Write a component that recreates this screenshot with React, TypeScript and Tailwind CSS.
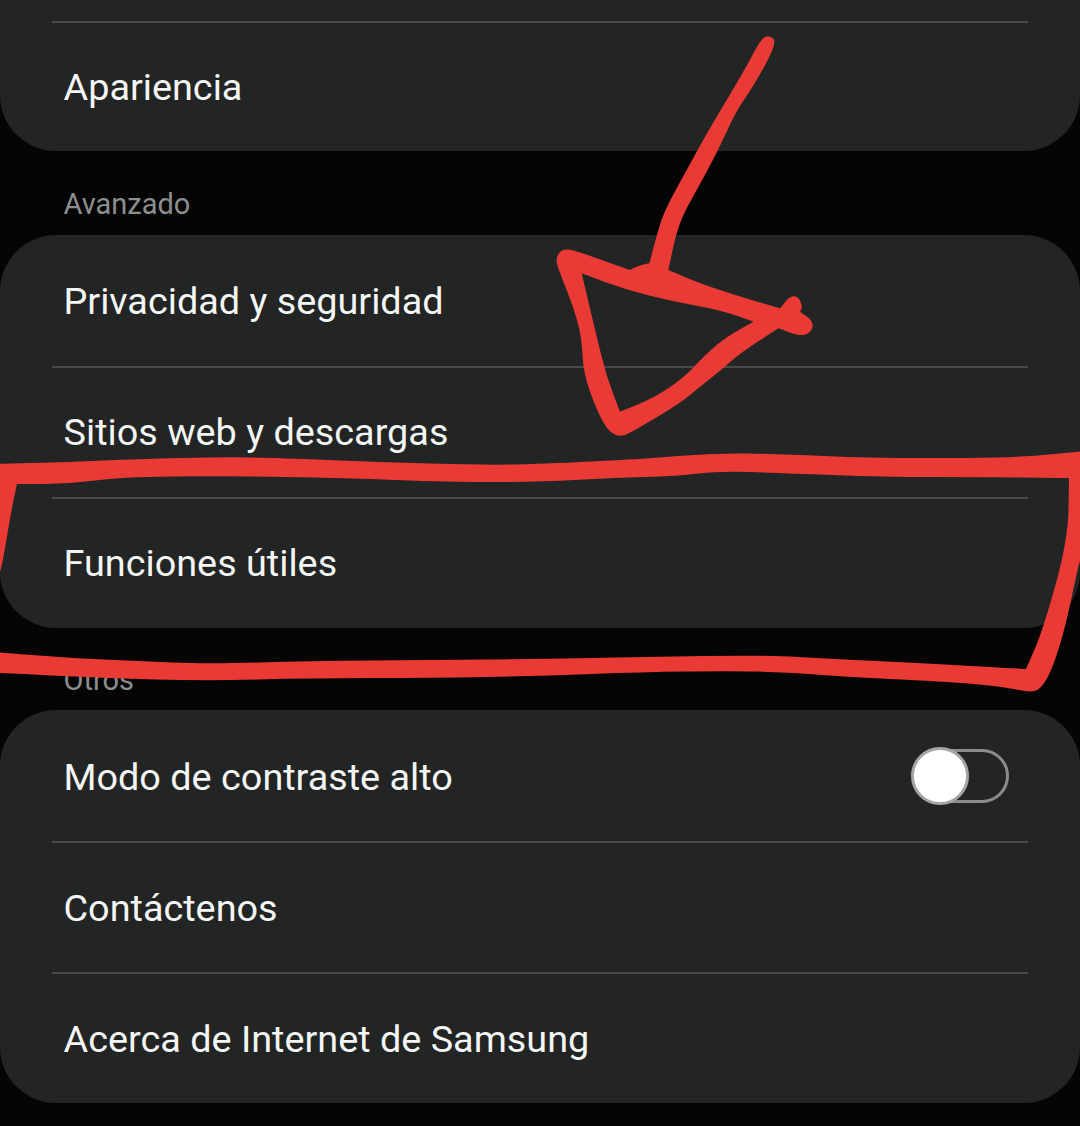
const font = { fontFamily: '"Roboto", "Liberation Sans", sans-serif' };

type P = number[];

// Closed smooth outline through midpoints; a doubled point stays a sharp corner.
function smooth(points: P[]): string {
  const n = points.length;
  const mid = (a: P, b: P) => [(a[0] + b[0]) / 2, (a[1] + b[1]) / 2];
  const s = mid(points[n - 1], points[0]);
  let d = `M${s[0]} ${s[1]}`;
  for (let i = 0; i < n; i++) {
    const m = mid(points[i], points[(i + 1) % n]);
    d += `Q${points[i][0]} ${points[i][1]} ${m[0]} ${m[1]}`;
  }
  return d + "Z";
}

const fromZoom = (pts: P[]) => pts.map(([x, y]) => [540 + x / 3, 20 + y / 3]);

const frame: P[] = [
  [-5, 464], [-5, 464], [69, 462], [138, 459], [224, 457], [276, 458], [379, 462], [483, 465], [540, 464], [643, 459], [712, 453],
  [781, 454], [868, 458], [971, 458], [1023, 457], [1085, 451], [1085, 451], [1085, 550], [1080, 557], [1066, 625], [1053, 667],
  [1043, 686], [1033, 693], [1005, 687], [954, 682], [850, 677], [781, 672], [730, 671], [643, 672], [540, 676], [431, 678],
  [310, 678], [207, 681], [103, 678], [0, 673], [-5, 673], [-5, 673], [-5, 652], [-5, 652], [69, 658], [138, 661], [207, 664], [310, 661],
  [431, 660], [540, 659], [643, 657], [764, 655], [833, 659], [919, 663], [988, 667], [1026, 669], [1026, 669], [1043, 630],
  [1068, 540], [1069, 478], [1069, 478], [971, 477], [885, 477], [781, 473], [719, 471], [678, 476], [609, 478], [540, 482],
  [448, 482], [345, 478], [224, 476], [121, 477], [69, 484], [17, 484], [17, 484], [12, 507], [3, 560], [0, 573], [-5, 573], [-5, 573],
];

const arrowOuter = fromZoom([
  [688, 44], [712, 68], [640, 200], [590, 270], [530, 400], [470, 510], [415, 610], [385, 750], [385, 750], [480, 790], [600, 830],
  [720, 865], [720, 865], [750, 828], [775, 830], [788, 860], [780, 875], [780, 875], [815, 900], [820, 925], [800, 945], [770, 945], [715, 925],
  [715, 925], [600, 1000], [550, 1045], [480, 1100], [420, 1150], [270, 1240], [240, 1250], [205, 1235], [170, 1170], [130, 1060],
  [125, 950], [100, 860], [60, 760], [45, 715], [70, 683], [130, 700], [270, 750], [270, 750], [300, 735], [328, 730], [328, 730], [360, 610], [385, 550],
  [440, 450], [500, 340], [560, 240], [625, 130], [662, 58],
]);

const arrowInner = fromZoom([
  [125, 760], [125, 760], [260, 810], [400, 845], [540, 870], [640, 905], [640, 905], [560, 950], [500, 1000], [430, 1075],
  [340, 1135], [240, 1175], [240, 1175], [200, 1070], [170, 950],
]);

function Row({ label, divider, low, children }: { label: string; divider?: boolean; low?: boolean; children?: React.ReactNode }) {
  return (
    <div className="h-[131px] flex flex-col">
      <div className={divider ? "h-[2px] mx-[52px] bg-[#484a49] shrink-0" : "h-[2px] shrink-0"} />
      <div className={low ? "flex-1 flex items-center justify-between pl-[63.5px] pr-[71px] pt-[3px]" : "flex-1 flex items-center justify-between pl-[63.5px] pr-[71px] pt-[1px]"}>
        <span className="text-[37.8px] leading-none text-[#f4f5f5]">{label}</span>
        {children}
      </div>
    </div>
  );
}

function Toggle() {
  return (
    <div className="relative w-[97px] h-[54px] rounded-full border-[3px] border-[#8b8c8c] -mt-[5px]">
      <div className="absolute left-[-4px] top-[-5px] w-[58px] h-[58px] rounded-full bg-white border-[3px] border-[#a5a5a5]" />
    </div>
  );
}

function Label({ text, className }: { text: string; className: string }) {
  return (
    <div className={`${className} flex items-center pl-[63.5px] text-[29px] leading-none text-[#8c8f8e]`}>{text}</div>
  );
}

function Scribble() {
  return (
    <svg className="absolute inset-0 pointer-events-none" width="1080" height="1126" viewBox="0 0 1080 1126">
      <path fill="#ea3a35" d={smooth(frame)} />
      <path fill="#ea3a35" fillRule="evenodd" d={smooth(arrowOuter) + smooth(arrowInner)} />
    </svg>
  );
}

export default function App() {
  return (
    <div className="relative w-[1080px] h-[1126px] overflow-hidden bg-[#050505]" style={font}>
      <div className="h-[151px] bg-[#222523] rounded-b-[56px] pt-[21px]">
        <div className="h-[2px] mx-[52px] bg-[#484a49]" />
        <div className="h-[128px] flex items-center pl-[63.5px] pt-[1px]">
          <span className="text-[37.8px] leading-none text-[#f4f5f5]">Apariencia</span>
        </div>
      </div>
      <Label text="Avanzado" className="h-[84px] pt-[22px]" />
      <div className="bg-[#222523] rounded-[56px]">
        <Row label="Privacidad y seguridad" />
        <Row label="Sitios web y descargas" divider />
        <Row label="Funciones útiles" divider />
      </div>
      <Label text="Otros" className="h-[82px] pt-[22px]" />
      <div className="bg-[#222523] rounded-[56px]">
        <Row label="Modo de contraste alto" low><Toggle /></Row>
        <Row label="Contáctenos" divider low />
        <Row label="Acerca de Internet de Samsung" divider low />
      </div>
      <Scribble />
    </div>
  );
}
